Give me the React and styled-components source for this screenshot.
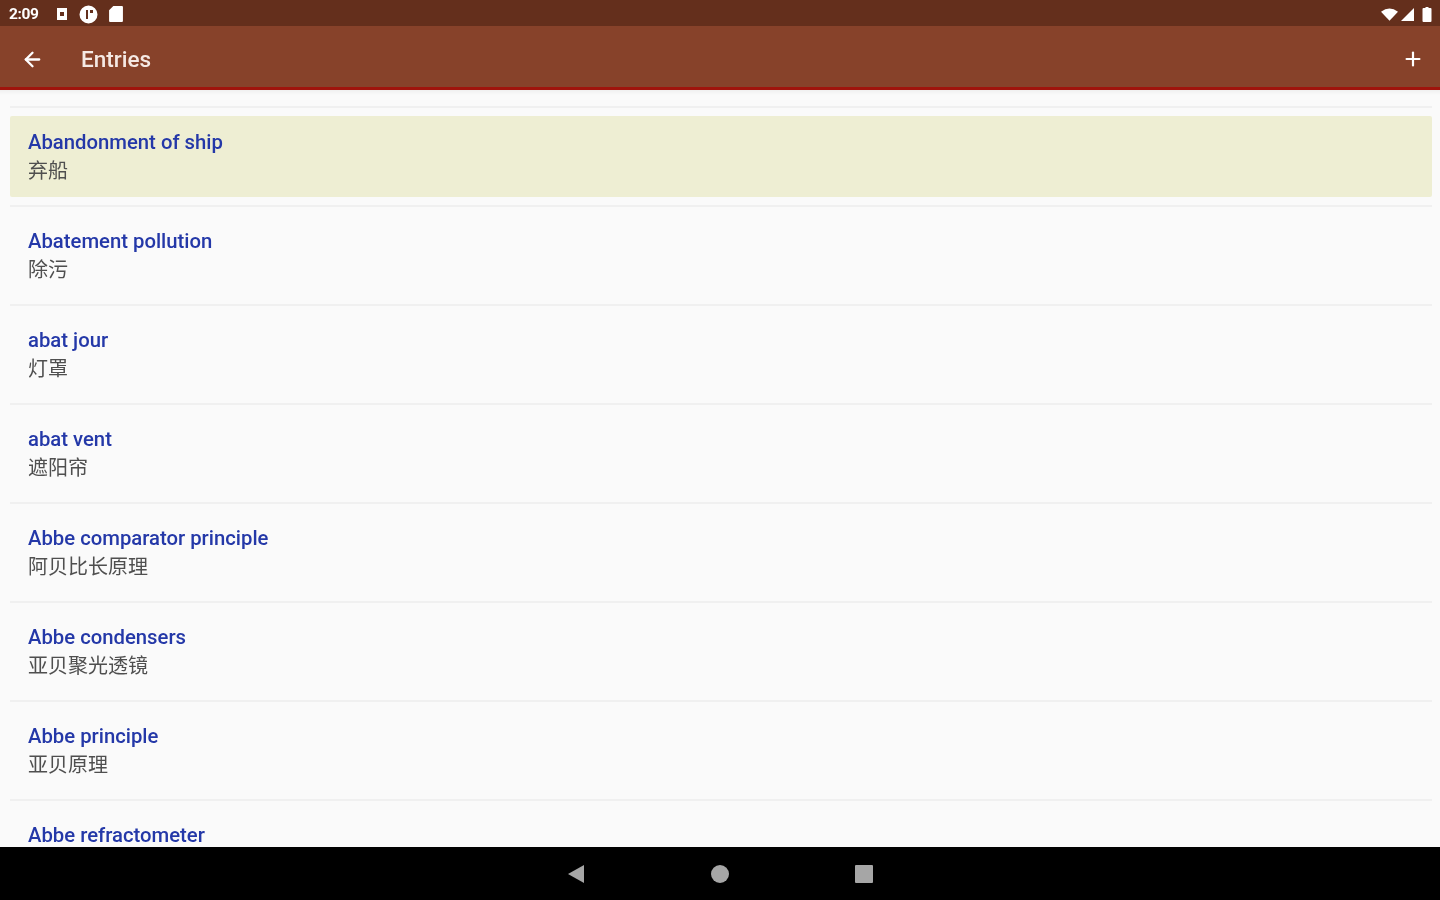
import React from 'react'
import styled, { createGlobalStyle } from 'styled-components'
import { ArrowLeft, Plus } from 'lucide-react'

const GlobalStyle = createGlobalStyle`
  html, body {
    margin: 0;
    height: 100%;
    overflow: hidden;
    background: #fafafa;
    font-family: Roboto, "Liberation Sans", "Noto Sans CJK SC", sans-serif;
  }
`

const Screen = styled.div`
  width: 1440px;
  height: 900px;
  display: flex;
  flex-direction: column;
  overflow: hidden;
`

/* STATUS BAR */
const StatusBar = styled.div`
  height: 26px;
  flex: none;
  background: #642f1c;
  display: flex;
  align-items: center;
  justify-content: space-between;
  padding: 2px 8px 0 9px;
  box-sizing: border-box;
  color: #fff;
  filter: blur(0.7px);
`

const StatusGroup = styled.div`
  display: flex;
  align-items: center;
  gap: ${(p) => p.$gap || 0}px;
`

const Clock = styled.span`
  font-size: 15.5px;
  font-weight: 700;
  letter-spacing: -0.4px;
  margin-right: 7px;
`

const BatteryIcon = styled.svg`
  margin-left: 5px;
`

/* APP BAR */
const AppBar = styled.div`
  height: 64px;
  box-sizing: border-box;
  flex: none;
  background: #87422a;
  border-bottom: 3px solid #a0140c;
  display: flex;
  align-items: center;
  color: #fff;
  padding: 5px 16px 0 21px;
`

const BarTitle = styled.h1`
  margin: 0 0 0 37px;
  flex: 1;
  font-size: 22.5px;
  font-weight: 500;
  color: #f5e9e4;
  filter: blur(0.7px);
`

const BarIcon = styled.span`
  display: flex;
  filter: blur(0.6px);
`

/* LIST */
const List = styled.div`
  flex: 1;
  min-height: 0;
  overflow: hidden;
  padding: 16px 8px 0 10px;
  background: linear-gradient(#f0f0f0, #fafafa 5px);
`

const Entry = styled.div`
  height: 81px;
  box-sizing: border-box;
  padding: 13px 18px 0;
  background: ${(p) => (p.$active ? '#eeeed3' : 'transparent')};
  border-radius: 2px;
  margin-bottom: 8px;
`

const Divider = styled.div`
  height: 2px;
  background: #f0f0f0;
  margin-bottom: 8px;
`

const Term = styled.div`
  font-size: 20.3px;
  line-height: 26px;
  font-weight: 500;
  color: #2438a8;
  white-space: nowrap;
  filter: blur(0.7px);
`

const Translation = styled.div`
  font-size: 20px;
  line-height: 32px;
  color: #4f4f4f;
  white-space: nowrap;
  filter: blur(0.7px);
`

/* NAV BAR */
const NavBar = styled.div`
  height: 53px;
  flex: none;
  background: #000;
  display: flex;
  align-items: center;
  justify-content: center;
  gap: 126px;
`

const NavIcon = styled.svg`
  filter: blur(0.5px);
`

const entries = [
  { term: 'Abandonment of ship', text: '弃船' },
  { term: 'Abatement pollution', text: '除污' },
  { term: 'abat jour', text: '灯罩' },
  { term: 'abat vent', text: '遮阳帘' },
  { term: 'Abbe comparator principle', text: '阿贝比长原理' },
  { term: 'Abbe condensers', text: '亚贝聚光透镜' },
  { term: 'Abbe principle', text: '亚贝原理' },
  { term: 'Abbe refractometer' },
]

export default function App() {
  return (
    <Screen>
      <GlobalStyle />
      <StatusBar>
        <StatusGroup $gap={11}>
          <Clock>2:09</Clock>
          <svg width="12" height="14" viewBox="0 0 12 14">
            <path fill="#fff" fillRule="evenodd" d="M1 1h10v12H1zM4 5v4h4V5z" />
          </svg>
          <svg width="19" height="19" viewBox="0 0 19 19">
            <path fill="#fff" fillRule="evenodd" d="M9.5.5a9 9 0 1 0 0 18 9 9 0 0 0 0-18zM7 5h2v9H7zM11 5h3v3h-3z" />
          </svg>
          <svg width="14" height="16" viewBox="0 0 13 15">
            <path fill="#fff" d="M4 0h8a1 1 0 0 1 1 1v13a1 1 0 0 1-1 1H1a1 1 0 0 1-1-1V4z" />
          </svg>
        </StatusGroup>
        <StatusGroup $gap={3}>
          <svg width="17" height="13" viewBox="0 0 18 13">
            <path fill="#fff" d="M0 3.5Q9-3 18 3.5L9 13z" />
          </svg>
          <svg width="13" height="13" viewBox="0 0 13 13">
            <path fill="#fff" d="M13 0v13H0z" />
          </svg>
          <BatteryIcon width="10" height="15" viewBox="0 0 9 15">
            <path fill="#fff" d="M3 0h3v1h2a1 1 0 0 1 1 1v12a1 1 0 0 1-1 1H1a1 1 0 0 1-1-1V2a1 1 0 0 1 1-1h2z" />
          </BatteryIcon>
        </StatusGroup>
      </StatusBar>

      <AppBar>
        <BarIcon>
          <ArrowLeft size={23} strokeWidth={2.4} />
        </BarIcon>
        <BarTitle>Entries</BarTitle>
        <BarIcon>
          <Plus size={22} strokeWidth={2.4} />
        </BarIcon>
      </AppBar>

      <List>
        <Divider />
        {entries.map((entry, i) => (
          <React.Fragment key={entry.term}>
            <Entry $active={i === 0}>
              <Term>{entry.term}</Term>
              {entry.text && <Translation>{entry.text}</Translation>}
            </Entry>
            <Divider />
          </React.Fragment>
        ))}
      </List>

      <NavBar>
        <NavIcon width="18" height="20" viewBox="0 0 18 20">
          <path fill="#a6a6a6" d="M17 1v18L1 10z" />
        </NavIcon>
        <NavIcon width="18" height="18" viewBox="0 0 18 18">
          <circle cx="9" cy="9" r="9" fill="#a6a6a6" />
        </NavIcon>
        <NavIcon width="18" height="18" viewBox="0 0 18 18">
          <rect width="18" height="18" rx="1" fill="#a6a6a6" />
        </NavIcon>
      </NavBar>
    </Screen>
  )
}
